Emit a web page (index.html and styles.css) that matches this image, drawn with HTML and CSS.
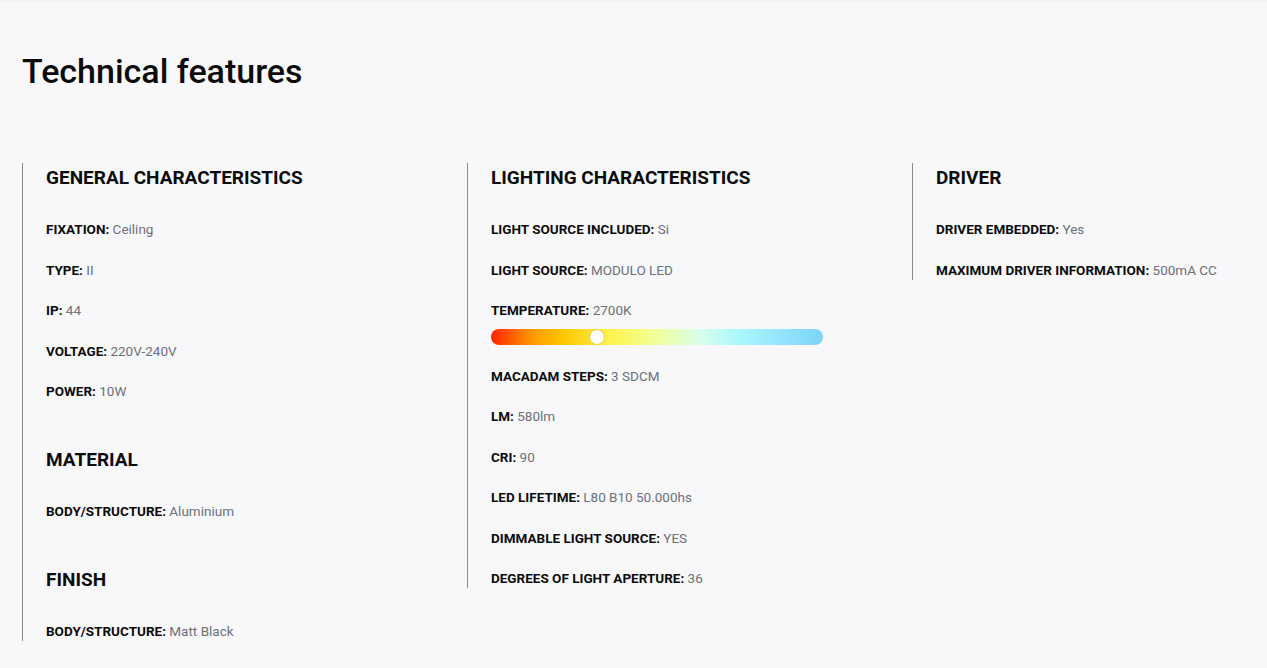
FILE: index.html
```html
<!DOCTYPE html>
<html lang="en">
<head>
<meta charset="utf-8">
<title>Technical features</title>
<link rel="stylesheet" href="styles.css">
</head>
<body>
<main class="page">
  <h1 class="title">Technical features</h1>
  <div class="columns">
    <section class="col">
      <h2 class="group-title">GENERAL CHARACTERISTICS</h2>
      <p class="item"><b>FIXATION:</b> Ceiling</p>
      <p class="item"><b>TYPE:</b> II</p>
      <p class="item"><b>IP:</b> 44</p>
      <p class="item"><b>VOLTAGE:</b> 220V-240V</p>
      <p class="item"><b>POWER:</b> 10W</p>
      <h2 class="group-title next">MATERIAL</h2>
      <p class="item"><b>BODY/STRUCTURE:</b> Aluminium</p>
      <h2 class="group-title next">FINISH</h2>
      <p class="item"><b>BODY/STRUCTURE:</b> Matt Black</p>
    </section>
    <section class="col">
      <h2 class="group-title">LIGHTING CHARACTERISTICS</h2>
      <p class="item"><b>LIGHT SOURCE INCLUDED:</b> Si</p>
      <p class="item"><b>LIGHT SOURCE:</b> MODULO LED</p>
      <div class="item temp">
        <p class="temp-label"><b>TEMPERATURE:</b> 2700K</p>
        <div class="temp-bar"><span class="knob"></span></div>
      </div>
      <p class="item"><b>MACADAM STEPS:</b> 3 SDCM</p>
      <p class="item"><b>LM:</b> 580lm</p>
      <p class="item"><b>CRI:</b> 90</p>
      <p class="item"><b>LED LIFETIME:</b> L80 B10 50.000hs</p>
      <p class="item"><b>DIMMABLE LIGHT SOURCE:</b> YES</p>
      <p class="item"><b>DEGREES OF LIGHT APERTURE:</b> 36</p>
    </section>
    <section class="col last">
      <h2 class="group-title">DRIVER</h2>
      <p class="item"><b>DRIVER EMBEDDED:</b> Yes</p>
      <p class="item"><b>MAXIMUM DRIVER INFORMATION:</b> 500mA CC</p>
    </section>
  </div>
</main>
</body>
</html>
```
FILE: styles.css
```css
* { box-sizing: border-box; }
html, body { margin: 0; padding: 0; }
body {
  background: #f8f8fa;
  font-family: Roboto, "Liberation Sans", Arial, sans-serif;
  color: #6b7178;
  width: 1267px;
  height: 668px;
  overflow: hidden;
  border-top: 2px solid #f3f3f5;
}
.page {
  padding: 49px 0 0 22px;
}
.title {
  margin: 0;
  font-size: 34px;
  line-height: 40px;
  font-weight: 500;
  color: #0c0c0c;
}
.columns {
  display: flex;
  align-items: flex-start;
  margin-top: 72px;
}
.col {
  flex: 0 0 445px;
  border-left: 1px solid #8a8a8a;
  padding-left: 23px;
}
.col.last { flex: 1 1 auto; }
.group-title {
  margin: 0;
  padding-top: 1px;
  font-size: 19px;
  line-height: 28px;
  font-weight: 700;
  color: #0c0c0c;
}
.group-title.next { margin-top: 44px; }
.item {
  margin: 20.5px 0 0;
  font-size: 13.5px;
  line-height: 20px;
}
.group-title + .item { margin-top: 27px; }
.item b {
  color: #0c0c0c;
  font-weight: 700;
}
.temp-label { margin: 0; }
.temp-bar {
  position: relative;
  margin-top: 9px;
  width: 332px;
  height: 16px;
  border-radius: 8px;
  background: linear-gradient(90deg,
    #ff2200 0%,
    #ff9d00 13%,
    #ffc800 22%,
    #fff44f 36%,
    #f0ff9a 50%,
    #d8ffea 63%,
    #a9f7ff 75%,
    #7dd3fa 100%);
}
.knob {
  position: absolute;
  left: 99px;
  top: 1px;
  width: 14px;
  height: 14px;
  border-radius: 50%;
  background: #fff;
  box-shadow: 0 0 2px rgba(0,0,0,0.25);
}
```
